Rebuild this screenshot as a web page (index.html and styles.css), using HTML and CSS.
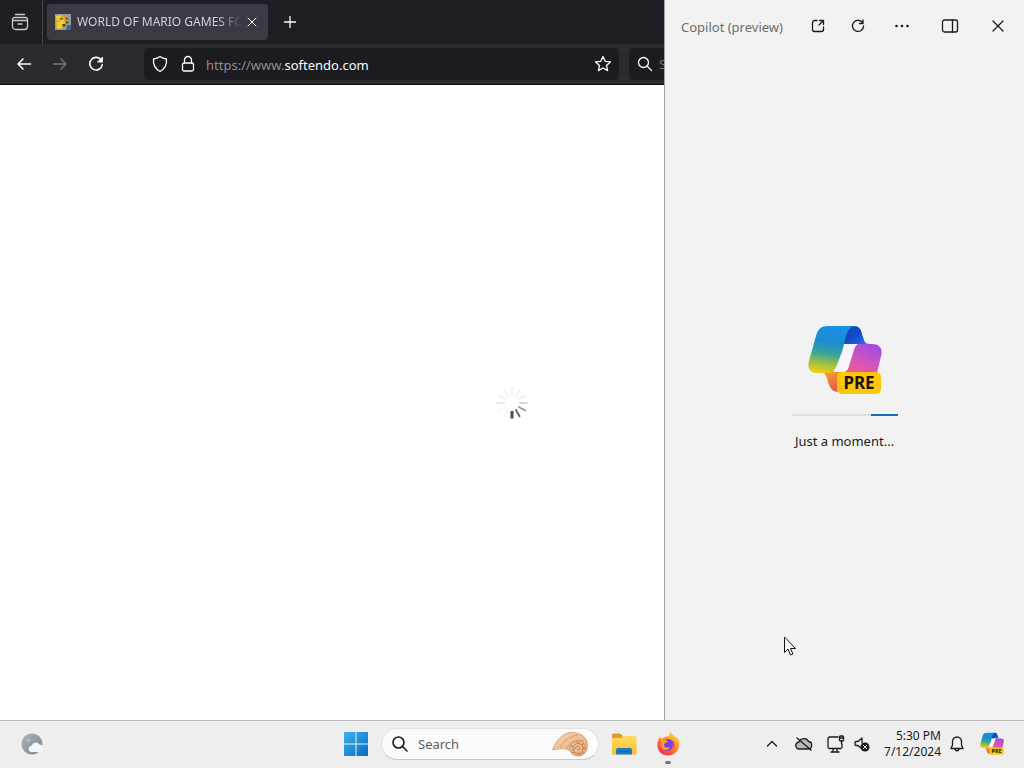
FILE: index.html
```html
<!DOCTYPE html>
<html lang="en">
<head>
<meta charset="utf-8">
<title>Desktop</title>
<link rel="stylesheet" href="styles.css">
</head>
<body>
<svg class="defs" aria-hidden="true">
  <defs>
    <linearGradient id="cp-blue" x1="0.55" y1="0" x2="0.4" y2="1">
      <stop offset="0" stop-color="#1a8fe6"/><stop offset=".35" stop-color="#1b8bd0"/><stop offset=".6" stop-color="#3aa597"/><stop offset=".8" stop-color="#97be47"/><stop offset="1" stop-color="#efca16"/>
    </linearGradient>
    <linearGradient id="cp-fold" x1="0" y1="0" x2="1" y2="1">
      <stop offset="0" stop-color="#0b46b8"/><stop offset=".5" stop-color="#1349c9"/><stop offset="1" stop-color="#2a7bea"/>
    </linearGradient>
    <linearGradient id="cp-pink" x1=".7" y1="0" x2=".3" y2="1">
      <stop offset="0" stop-color="#a44be0"/><stop offset=".4" stop-color="#cf55bd"/><stop offset=".75" stop-color="#ef5d8c"/><stop offset="1" stop-color="#fb7a6a"/>
    </linearGradient>
    <linearGradient id="cp-orange" x1="0" y1="0" x2=".4" y2="1">
      <stop offset="0" stop-color="#f6b01e"/><stop offset=".5" stop-color="#f27c40"/><stop offset="1" stop-color="#e8584e"/>
    </linearGradient>
    <symbol id="copilot" viewBox="0 0 74 72">
      <path fill="url(#cp-fold)" d="M38 1h8c5 0 7 3 8 8l2 6c1 3 3 4 6 4H34z"/>
      <path fill="url(#cp-orange)" d="M14 46h24l-5 9c-2 5-3 10 2 12h-4c-7 0-9-4-11-10-1-5-3-9-6-11z"/>
      <path fill="url(#cp-blue)" d="M20 1h29c-7 0-9 4-11 10l-4 16-6 15c-2 4-4 6-8 6H9c-7 0-10-5-8-12L8 11C10 4 13 1 20 1z"/>
      <path fill="url(#cp-pink)" d="M47 19h17c8 0 11 5 9 12l-5 21c-2 6-6 9-12 9H33z"/>
      <path fill="#f7f5f9" d="M50 19h-6c-5 0-7 3-8 7l-6 16c-1 3-3 5-6 5h10c4 0 6-2 7-6l5-16c1-3 2-5 4-6z"/>
      <rect x="29" y="47" width="44" height="22" rx="5" fill="#fdc60b"/>
      <text x="51" y="64" text-anchor="middle" class="pre">PRE</text>
    </symbol>
    <linearGradient id="win" x1="0" y1="0" x2="1" y2="1">
      <stop offset="0" stop-color="#3eb4ed"/><stop offset="1" stop-color="#056bc2"/>
    </linearGradient>
    <linearGradient id="folder" x1="0" y1="0" x2="0" y2="1"><stop offset="0" stop-color="#ffdc62"/><stop offset="1" stop-color="#f8bd28"/></linearGradient>
    <linearGradient id="fox" x1=".8" y1="0" x2=".2" y2="1"><stop offset="0" stop-color="#ffe03c"/><stop offset=".45" stop-color="#ff8c29"/><stop offset="1" stop-color="#ef2757"/></linearGradient>
    <linearGradient id="shell" x1="0" y1="0" x2="1" y2="1"><stop offset="0" stop-color="#f9d6b2"/><stop offset="1" stop-color="#e5a474"/></linearGradient>
    <linearGradient id="moon" x1="0" y1="0" x2="1" y2="1"><stop offset="0" stop-color="#a9b1b8"/><stop offset="1" stop-color="#7e8991"/></linearGradient>
  </defs>
</svg>

<main class="desktop">
  <section class="browser" aria-label="Browser">
    <div class="tabstrip">
      <button class="firefox-view" aria-label="View recent browsing">
        <svg width="18" height="18" viewBox="0 0 18 18" class="line"><path d="M4.500 1.500h9M1.500 6.500a2 2 0 0 1 2-2h11a2 2 0 0 1 2 2v7a3 3 0 0 1-3 3h-9a3 3 0 0 1-3-3zM1.500 7.500h15M7 11h4"/></svg>
      </button>
      <div class="tab">
        <svg width="16" height="16" viewBox="0 0 16 16" aria-hidden="true"><path fill="#8f9da0" d="M0 0h16v16H0z"/><path fill="#d6ae22" d="M1 3l4-2 5 1 2 4-2 3 1 4-5 2-5-1z"/><path fill="#f0cf38" d="M2 9l5-4 3 3-3 6-5 1zM1 2l4-1 1 3-4 3z"/><path fill="#594415" d="M5 4l3 0-2 2zM10 7l4 1-2 2zM7 10l3 0 1 2-3 1z"/><path fill="#b53d2c" d="M10 3l4 2-3 1z"/><path fill="#49678d" d="M12 11h4v5h-5z"/></svg>
        <span class="tab-title">WORLD OF MARIO GAMES FOR</span>
        <button class="tab-close" aria-label="Close tab"><svg width="10" height="10" viewBox="0 0 10 10" class="line thin"><path d="M1 1l8 8M9 1L1 9"/></svg></button>
      </div>
      <button class="new-tab" aria-label="New tab"><svg width="14" height="14" viewBox="0 0 14 14" class="line"><path d="M7 1.500v11M1.500 7h11"/></svg></button>
    </div>
    <div class="toolbar">
      <div class="nav">
        <button aria-label="Back"><svg width="16" height="16" viewBox="0 0 16 16" class="line bold"><path d="M14.500 8H2M7 3L2 8l5 5"/></svg></button>
        <button aria-label="Forward" disabled><svg width="16" height="16" viewBox="0 0 16 16" class="line"><path d="M1.500 8H14M9 3l5 5-5 5"/></svg></button>
        <button aria-label="Reload"><svg width="16" height="16" viewBox="0 0 16 16" class="line bold"><path d="M13.500 4.500A6.300 6.300 0 1 0 14.300 8.500"/><path fill="currentColor" stroke-width="1" d="M14.500 1.500v4.500H10z"/></svg></button>
      </div>
      <div class="urlbar">
        <svg width="16" height="18" viewBox="0 0 16 18" class="line"><path d="M8 1.500c2 1.500 4 2.200 6.500 2.500C15 9.500 12.500 14 8 16.500 3.500 14 1 9.500 1.500 4 4 3.700 6 3 8 1.500z"/></svg>
        <svg width="14" height="18" viewBox="0 0 14 18" class="line"><path d="M3.500 8V5a3.500 3.500 0 0 1 7 0v3"/><rect x="1.500" y="8" width="11" height="8" rx="1.500"/></svg>
        <a class="url" href="#"><span>https://www.</span>softendo.com</a>
        <button aria-label="Bookmark this page"><svg width="18" height="18" viewBox="0 0 18 18" class="line"><path d="M9 1.500l2.200 4.800 5.200.6-3.900 3.500 1.100 5.200L9 13l-4.600 2.600 1.100-5.200L1.600 6.900l5.200-.6z"/></svg></button>
      </div>
      <div class="searchbar">
        <svg width="16" height="16" viewBox="0 0 16 16" class="line"><circle cx="6.500" cy="6.500" r="5"/><path d="M10 10l4.500 4.500"/></svg>
        <input type="text" placeholder="Search" aria-label="Search the web">
      </div>
    </div>
    <div class="page">
      <svg width="32" height="32" viewBox="-16 -16 32 32" role="img" aria-label="Loading">
        <g stroke-width="2" stroke-linecap="round">
          <path stroke="#4a4a4a" stroke-width="3" stroke-linecap="butt" d="M0 8v7.500"/>
          <path stroke="#6a6a6a" d="M4 7l3.500 6.200"/>
          <path stroke="#9a9a9a" d="M7 4l6.200 3.500"/>
          <path stroke="#d8d8d8" d="M8 0h7"/>
          <path stroke="#f0f0f0" d="M7-4l6.200-3.500M4-7l3.500-6.200M0-8v-7"/>
          <path stroke="#f2f2f2" d="M-4-7l-3.500-6.200M-7-4l-6.200-3.500"/>
          <path stroke="#e9e9e9" d="M-8 0h-7"/>
          <path stroke="#f5f5f5" d="M-7 4l-6.200 3.500M-4 7l-3.500 6.200"/>
        </g>
      </svg>
    </div>
  </section>

  <aside class="copilot" aria-label="Copilot">
    <header class="copilot-bar">
      <h1>Copilot (preview)</h1>
      <button aria-label="Open in browser"><svg width="14" height="14" viewBox="0 0 14 14" class="line"><path d="M6 1.500H3.500a2 2 0 0 0-2 2v7a2 2 0 0 0 2 2h7a2 2 0 0 0 2-2V8M8.500 1.500h4v4M12.500 1.500L8 6"/></svg></button>
      <button aria-label="Refresh"><svg width="14" height="14" viewBox="0 0 14 14" class="line"><path d="M11.500 3.500A5.600 5.600 0 1 0 12.600 7M12 1v3.500H8.500"/></svg></button>
      <button aria-label="More options" class="more"><svg width="14" height="4" viewBox="0 0 14 4"><circle cx="1.500" cy="2" r="1.300"/><circle cx="7" cy="2" r="1.300"/><circle cx="12.500" cy="2" r="1.300"/></svg></button>
      <button aria-label="Dock side by side" class="wide"><svg width="18" height="14" viewBox="0 0 18 14" class="line"><rect x="1.500" y="1" width="15" height="12" rx="2"/><path d="M11.500 1v12"/></svg></button>
      <button aria-label="Close" class="wide"><svg width="12" height="12" viewBox="0 0 12 12" class="line"><path d="M1 1l10 10M11 1L1 11"/></svg></button>
    </header>
    <div class="loading">
      <svg width="74" height="72" aria-hidden="true"><use href="#copilot"/></svg>
      <div class="bar" role="progressbar" aria-label="Loading Copilot"><span></span></div>
      <p>Just a moment...</p>
    </div>
  </aside>
</main>

<footer class="taskbar">
  <div class="task-left">
    <button aria-label="Widgets"><svg width="24" height="24" viewBox="0 0 24 24"><circle cx="12" cy="12" r="10.500" fill="url(#moon)"/><circle cx="8" cy="8" r="2" fill="#b4bbc1"/><circle cx="13" cy="5" r="1.500" fill="#959ea6"/><path fill="#f5f8fb" d="M12 20a3 3 0 0 1-.5-6 4.500 4.500 0 0 1 8-1.500c3 .5 4 2 3.500 4.500-.5 2-2 3-4 3z"/></svg></button>
  </div>
  <div class="task-center">
    <button aria-label="Start"><svg width="24" height="24" viewBox="0 0 24 24" fill="url(#win)"><path d="M0 0h24v24H0z"/><path d="M0 11.500h24v1H0zM11.500 0h1v24h-1z" fill="#eee"/></svg></button>
    <label class="task-search">
      <svg width="16" height="16" viewBox="0 0 16 16" class="line bold"><circle cx="6.500" cy="6.500" r="5.500"/><path d="M10.500 10.500L15 15"/></svg>
      <input type="text" placeholder="Search" aria-label="Search">
      <svg width="36" height="26" viewBox="0 0 36 26"><path fill="url(#shell)" stroke="#c4875a" stroke-width=".6" d="M.5 19C4 9 11 1.500 20 1.500c9 0 15.500 5 15.500 12.500 0 7-4 11-9.500 11-4 0-7-2-8-5.500-6-2.500-11-2-17.500-.5z"/><path fill="none" stroke="#c98a5b" stroke-width=".7" d="M18 19c-1-6 3-9 8-9s8 4 7 8M8 17c3-7 8-11 18-13M15 17c3-6 8-8 17-7"/><circle cx="26" cy="17.500" r="5" fill="#eebf96" stroke="#b0703f" stroke-width=".8"/><path fill="none" stroke="#b0703f" stroke-width=".8" d="M23 18.500c0-4 5-4 5-1s-3 2-3 0M26 12.500v-2M31 17.500h3M22 21l-2 1M27 22.500l1 2M21 15.500l-2-1M30 14l2-2M30 21l2 2"/></svg>
    </label>
    <button aria-label="File Explorer"><svg width="26" height="22" viewBox="0 0 26 22"><path fill="#e09b24" d="M1 2A1.500 1.500 0 0 1 2.500.5H9L12 3v5H1z"/><path fill="url(#folder)" d="M1 5h9l2-2h12a1.500 1.500 0 0 1 1.500 1.500V20a1.500 1.500 0 0 1-1.500 1.500H2.500A1.500 1.500 0 0 1 1 20z"/><path fill="#187bd0" d="M5 21.500V17a2 2 0 0 1 2-2h12a2 2 0 0 1 2 2v4.500z"/><path fill="#0b5ba8" d="M8 18h10v1H8z"/></svg></button>
    <button aria-label="Firefox" class="running"><svg width="24" height="24" viewBox="0 0 24 24"><path fill="url(#fox)" d="M4 5l1.500 2C7 6 8 5 9 5c2-1 3-1 4-1 0-2 1-3 2-4 1 3 4 4 5 6l1-1c5 8 1 18-9 18.500C3 23.500-2 14 4 5z"/><circle cx="12" cy="13" r="6" fill="#7542e5"/><path fill="#ff9a2b" d="M5 8c3-1 5 0 7 1.500-1 1.500-3 1-4 2.500-.5 3 3 5 6 3-1 4-8 4-9-1z"/><path fill="#ff5a3d" d="M17 8c4 5 2 11-5 11 4-1 6-5 5-11z"/></svg></button>
  </div>
  <div class="task-right">
    <button aria-label="Show hidden icons"><svg width="12" height="8" viewBox="0 0 12 8" class="line"><path d="M1.500 6L6 1.500 10.500 6"/></svg></button>
    <button aria-label="OneDrive"><svg width="18" height="14" viewBox="0 0 18 14" class="line"><path fill="#b8b8b8" d="M4.500 12a3.500 3.500 0 0 1-.5-7c1-4 8-5 9.500-.5 4 0 4.500 7 0 7.500z"/><path d="M2 1l14 12"/></svg></button>
    <button aria-label="Network"><svg width="18" height="18" viewBox="0 0 18 18" class="line"><path d="M11 2H3a2 2 0 0 0-2 2v8a1.500 1.500 0 0 0 1.500 1.500h11A1.500 1.500 0 0 0 15 12V9M6 13.500V17M10 13.500V17M4 17h8M14.500 6v3"/><rect x="12.500" y="1" width="4" height="5" rx="1"/><path d="M12.500 3h4"/></svg></button>
    <button aria-label="Volume muted" class="volume"><svg width="16" height="16" viewBox="0 0 16 16"><path class="line" d="M7 12L4 9.500H2a1 1 0 0 1-1-1v-2a1 1 0 0 1 1-1h2l4-3.500v5"/><circle cx="11" cy="11" r="4.500" fill="#1b1b1b"/><path stroke="#eee" d="M9 9l4 4M13 9l-4 4"/></svg></button>
    <button class="clock"><time datetime="2024-07-12T17:30">5:30 PM<br>7/12/2024</time></button>
    <button aria-label="Notifications"><svg width="14" height="16" viewBox="0 0 14 16" class="line"><path d="M7 1a4.500 4.500 0 0 0-4.500 4.500V9L1 12.500h12L11.500 9V5.500A4.500 4.500 0 0 0 7 1zM5 13c.5 2.500 3.500 2.500 4 0"/></svg></button>
    <button aria-label="Copilot" class="copilot-btn"><svg width="24" height="24" viewBox="0 0 74 72"><use href="#copilot"/></svg></button>
  </div>
</footer>

<svg class="cursor" width="13" height="20" viewBox="0 0 13 20" aria-hidden="true"><path fill="#fff" stroke="#111" d="M.5 1v15.500l3.500-3.500 2.500 6 2.500-1-2.500-5.500h5z"/></svg>
</body>
</html>
```
FILE: styles.css
```css
* { box-sizing: border-box; }

body {
  margin: 0;
  height: 100vh;
  display: grid;
  grid-template-rows: minmax(0, 1fr) 48px;
  overflow: hidden;
  font: 13px/16px "Noto Sans", sans-serif;
  color: #1b1b1b;
}

button {
  display: grid;
  place-items: center;
  flex: none;
  padding: 0;
  border: 0;
  background: none;
  color: inherit;
  font: inherit;
}

input {
  flex: 1;
  min-width: 0;
  padding: 0;
  border: 0;
  outline: 0;
  background: none;
  color: inherit;
  font: inherit;
}

svg { display: block; flex: none; }

.defs { position: absolute; width: 0; height: 0; }
.pre { font: bold 17px "Noto Sans", sans-serif; fill: #1b1208; }

.line {
  fill: none;
  stroke: currentColor;
  stroke-width: 1.3;
  stroke-linecap: round;
  stroke-linejoin: round;
}
.thin { stroke-width: 1; }
.bold { stroke-width: 1.6; }

.desktop {
  display: grid;
  grid-template-columns: minmax(0, 1fr) 360px;
}

/* The browser window spans the desktop; the Copilot panel is docked over its right side. */
.browser {
  grid-area: 1 / 1 / 2 / 3;
  display: flex;
  flex-direction: column;
  background: #fff;
  color: #fbfbfe;
}

.tabstrip {
  display: flex;
  height: 44px;
  background: #1e1d23;
}
.firefox-view {
  width: 43px;
  padding-right: 2px;
  border-right: 1px solid #47464f;
  color: #c9c9d0;
}
.tab {
  display: flex;
  align-items: center;
  gap: 6px;
  width: 221px;
  margin: 4px;
  padding: 0 6px 0 8px;
  border-radius: 4px;
  background: #3b3a42;
}
.tab-title {
  flex: 1;
  overflow: hidden;
  white-space: nowrap;
  font-size: 12px;
  line-height: 18px;
  color: #d0d0d5;
  mask-image: linear-gradient(to left, transparent, #000 24px);
}
.tab-close { width: 20px; height: 20px; margin-left: -6px; }
.new-tab { width: 36px; }

.toolbar {
  display: flex;
  align-items: center;
  gap: 10px;
  height: 41px;
  padding: 0 8px;
  border-bottom: 1px solid #0c0c0d;
  background: #2b2a2f;
}
.nav { display: flex; width: 126px; }
.nav button { width: 36px; height: 32px; padding-right: 4px; }
.nav button:disabled { color: #77767e; }
.urlbar, .searchbar {
  display: flex;
  align-items: center;
  height: 32px;
  padding: 0 7px 0 8px;
  border-radius: 4px;
  background: #1c1b20;
}
.urlbar { flex: 1; gap: 13px; }
.searchbar { flex: 0 0 387px; gap: 6px; }
.url {
  flex: 1;
  margin-left: -2px;
  padding-top: 2px;
  color: inherit;
  text-decoration: none;
}
.url span { color: #8f8e94; }

.page { flex: 1; display: grid; place-items: center; }

.copilot {
  grid-area: 1 / 2 / 2 / 3;
  display: flex;
  flex-direction: column;
  border-left: 1px solid #a5a5ab;
  background: #f2f2f2;
}
.copilot-bar {
  display: flex;
  align-items: center;
  height: 52px;
  padding: 0 2px 0 16px;
}
.copilot-bar h1 {
  flex: 1;
  margin: 0;
  padding-top: 2px;
  font-size: 13px;
  font-weight: 400;
  color: #6d6d6d;
}
.copilot-bar button { width: 40px; height: 40px; }
.copilot-bar .more { width: 48px; fill: #1b1b1b; }
.copilot-bar .wide { width: 48px; }

.loading {
  flex: 1;
  display: flex;
  flex-direction: column;
  align-items: center;
  justify-content: center;
  gap: 17px;
  padding-top: 2px;
}
.bar { display: flex; justify-content: flex-end; width: 106px; height: 2px; background: #dedede; }
.bar span { width: 27px; background: #176cb9; }
.loading p { margin: 0; }

.taskbar {
  display: grid;
  grid-template-columns: 1fr auto 1fr;
  align-items: center;
  padding-bottom: 2px;
  border-top: 1px solid #bdbdbd;
  background: #eee;
}
.task-left { padding-left: 20px; }
.task-center, .task-right { display: flex; align-items: center; }
.task-center button { width: 44px; height: 40px; }
.task-search {
  display: flex;
  align-items: center;
  gap: 10px;
  width: 218px;
  height: 32px;
  margin: 0 3px;
  padding: 0 10px;
  border: 1px solid #e2e2e2;
  border-bottom-color: #c8c8c8;
  border-radius: 16px;
  background: #fbfbfb;
}
.task-search input::placeholder { color: #5c5c5c; opacity: 1; }
.running { position: relative; }
.running::after {
  content: "";
  position: absolute;
  bottom: 0;
  width: 6px;
  height: 3px;
  border-radius: 2px;
  background: #777;
}
.task-right { justify-content: flex-end; padding-right: 16px; }
.task-right button { width: 32px; height: 40px; }
.task-right .volume { width: 20px; margin-right: 12px; }
.task-right .clock { width: auto; font-size: 12px; text-align: right; }
.task-right .copilot-btn { margin-left: 3px; }

.cursor { position: absolute; left: 784px; top: 636px; }
```
